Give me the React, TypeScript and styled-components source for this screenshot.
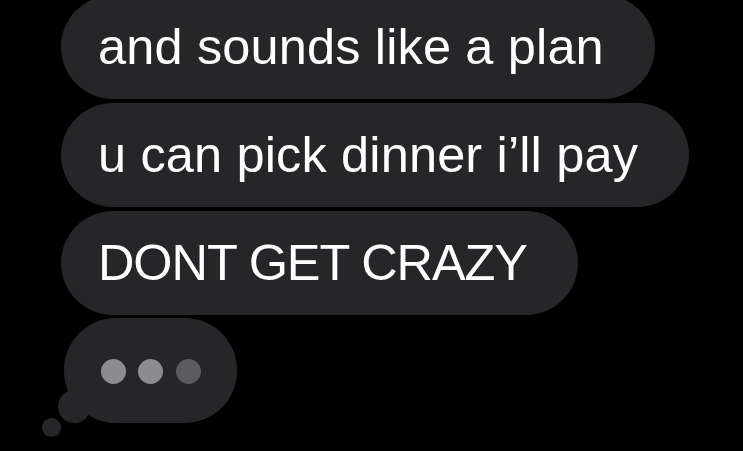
import React from "react";
import styled, { createGlobalStyle } from "styled-components";

const Global = createGlobalStyle`
  html, body { margin: 0; padding: 0; background: #000; }
  body { width: 743px; height: 451px; overflow: hidden; }
`;

const Thread = styled.div`
  display: flex;
  flex-direction: column;
  align-items: flex-start;
  gap: 4px;
  margin-top: -5px;
  padding-left: 61px;
`;

const Bubble = styled.div<{ $caps?: boolean }>`
  box-sizing: border-box;
  height: 104px;
  padding: 0 51px 0 37px;
  border-radius: 52px;
  background: #262629;
  color: #ffffff;
  font-family: "Liberation Sans", Arial, sans-serif;
  font-size: 50.5px;
  line-height: 104px;
  letter-spacing: ${(p) => (p.$caps ? "-1.1px" : "0.15px")};
  white-space: nowrap;
`;

const TypingWrap = styled.div`
  position: relative;
  margin-top: -1px;
  margin-left: 3px;
`;

const TypingBubble = styled.div`
  box-sizing: border-box;
  width: 173px;
  height: 105px;
  border-radius: 52px;
  background: #262629;
  display: flex;
  align-items: center;
  justify-content: center;
  gap: 12.5px;
  padding-top: 2px;
`;

const Dot = styled.span<{ $shade: string }>`
  width: 25px;
  height: 25px;
  border-radius: 50%;
  background: ${(p) => p.$shade};
`;

const TailCircle = styled.span<{ $size: number; $left: number; $top: number }>`
  position: absolute;
  width: ${(p) => p.$size}px;
  height: ${(p) => p.$size}px;
  left: ${(p) => p.$left}px;
  top: ${(p) => p.$top}px;
  border-radius: 50%;
  background: #262629;
`;

export default function App() {
  return (
    <>
      <Global />
      <Thread>
        <Bubble>and sounds like a plan</Bubble>
        <Bubble>u can pick dinner i’ll pay</Bubble>
        <Bubble $caps>DONT GET CRAZY</Bubble>
        <TypingWrap>
          <TypingBubble>
            <Dot $shade="#8c8c90" />
            <Dot $shade="#8c8c90" />
            <Dot $shade="#5b5b5f" />
          </TypingBubble>
          <TailCircle $size={33} $left={-6} $top={72} />
          <TailCircle $size={19} $left={-22} $top={100} />
        </TypingWrap>
      </Thread>
    </>
  );
}
